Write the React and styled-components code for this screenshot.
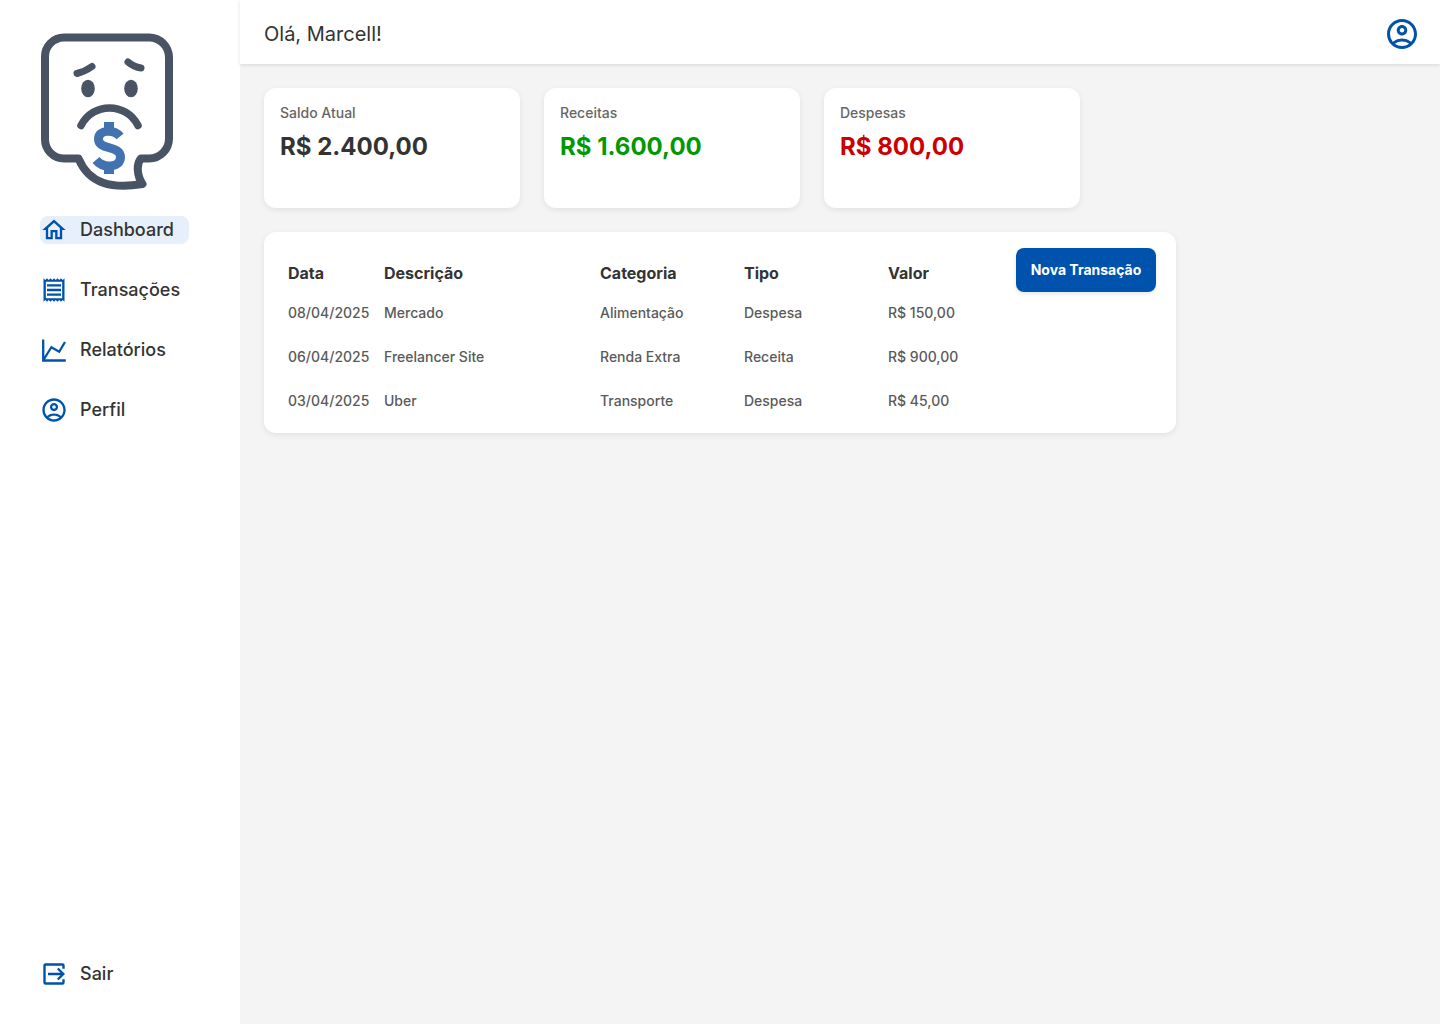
import React from "react";
import styled, { createGlobalStyle } from "styled-components";
import { MdOutlineHome, MdOutlineReceipt, MdOutlineAccountCircle } from "react-icons/md";

const GlobalStyle = createGlobalStyle`
  *, *::before, *::after { box-sizing: border-box; }
  body { margin: 0; background: #f4f4f4; color: #333; font-family: Inter, "Liberation Sans", sans-serif; }
  h1, h2, p { margin: 0; }
`;

const Shell = styled.div`
  display: flex;
  min-height: 100vh;
`;

const Sidebar = styled.aside`
  flex: 0 0 240px;
  display: flex;
  flex-direction: column;
  align-items: flex-start;
  padding: 32px 40px 36px;
  background: #fff;
`;

const Logo = styled.svg`
  display: block;
  width: 136px;
  height: 160px;
`;

const Menu = styled.nav`
  display: flex;
  flex: 1;
  flex-direction: column;
  align-items: flex-start;
  gap: 32px;
  margin-top: 24px;
`;

const MenuLink = styled.a`
  display: flex;
  align-items: center;
  gap: 12px;
  height: 28px;
  padding-right: 15px;
  border-radius: 8px;
  background: ${(p) => (p.$active ? "#e6effa" : "transparent")};
  color: #333;
  font-size: 18px;
  font-weight: 500;
  line-height: 28px;
  text-decoration: none;
  white-space: nowrap;

  svg { flex: none; width: 28px; height: 28px; color: #0053ad; }
`;

const Main = styled.div`
  flex: 1;
  min-width: 0;
`;

const TopBar = styled.header`
  display: flex;
  align-items: center;
  justify-content: space-between;
  height: 64px;
  padding: 4px 20px 0 24px;
  background: #fff;
  box-shadow: 0 1px 4px rgba(0, 0, 0, 0.12);
`;

const Greeting = styled.h1`
  font-size: 20px;
  font-weight: 400;
  line-height: 24px;
`;

const ProfileButton = styled.button`
  display: flex;
  padding: 0;
  border: 0;
  background: none;
  color: #0053ad;
  cursor: pointer;

  svg { width: 36px; height: 36px; }
`;

const Content = styled.main`
  display: flex;
  flex-direction: column;
  gap: 24px;
  padding: 24px;
`;

const Cards = styled.section`
  display: flex;
  flex-wrap: wrap;
  gap: 24px;
`;

const Card = styled.article`
  width: 256px;
  min-height: 120px;
  padding: 16px;
  border-radius: 12px;
  background: #fff;
  box-shadow: 0 2px 6px rgba(0, 0, 0, 0.08);
`;

const CardLabel = styled.h2`
  color: #666;
  font-size: 14px;
  font-weight: 500;
  line-height: 18px;
`;

const CardValue = styled.p`
  margin-top: 8px;
  color: ${(p) => p.$color};
  font-size: 24px;
  font-weight: 700;
  line-height: 34px;
`;

const Panel = styled.section`
  display: flex;
  align-items: flex-start;
  justify-content: space-between;
  width: 100%;
  max-width: 912px;
  padding: 16px 20px 10px 24px;
  border-radius: 12px;
  background: #fff;
  box-shadow: 0 2px 6px rgba(0, 0, 0, 0.08);
`;

const Table = styled.table`
  border-collapse: collapse;
  table-layout: fixed;
  width: 720px;
  text-align: left;

  th, td { padding: 0; white-space: nowrap; }
  th { height: 43px; padding-top: 7px; color: #333; font-size: 16px; font-weight: 700; line-height: 20px; }
  td { height: 44px; color: #5a5a5a; font-size: 14px; font-weight: 500; line-height: 20px; }
`;

const Col = styled.col`
  width: ${(p) => p.$width}px;
`;

const PrimaryButton = styled.button`
  flex: none;
  width: 140px;
  height: 44px;
  padding: 0;
  border: 0;
  border-radius: 8px;
  background: #0053ad;
  box-shadow: 0 2px 4px rgba(0, 0, 0, 0.1);
  color: #fff;
  font: 700 14px/20px Inter, "Liberation Sans", sans-serif;
  cursor: pointer;
`;

function ChartIcon() {
  return (
    <svg viewBox="0 0 28 28" fill="none" stroke="currentColor" strokeWidth="2.3" aria-hidden="true">
      <path d="M3.2 3.5v21h22.6M3.7 23.5l7.7-12.3 7.8 4.6 5.8-9.8" />
    </svg>
  );
}

function ExitIcon() {
  return (
    <svg viewBox="0 0 28 28" fill="none" stroke="currentColor" strokeWidth="2.4" aria-hidden="true">
      <path d="M23.5 8.8V5.5a1 1 0 0 0-1-1h-17a1 1 0 0 0-1 1v17a1 1 0 0 0 1 1h17a1 1 0 0 0 1-1v-3.3M8 14h15M17.8 8.5l5.500 5.500-5.500 5.500" />
    </svg>
  );
}

function SadBill() {
  return (
    <Logo viewBox="0 0 136 160" role="img" aria-label="Logo" fill="none" stroke="#485364" strokeWidth="8" strokeLinecap="round" strokeLinejoin="round">
      <path d="M38.5 126.5H24A19 19 0 0 1 5 107V25A19 19 0 0 1 24 5.5H109A20 20 0 0 1 129 26V106A20 20 0 0 1 109 126.5H101C96 132 97 144 102.5 152C72 157 49 152 38.5 126.5Z" />
      <path d="M37 41.5Q45 39.5 52 34.5M88 30Q94 35 101 36" strokeWidth="7" />
      <path d="M41 93.5C53 70 86 70 98 93.5" strokeWidth="7.5" />
      <g fill="#485364" stroke="none">
        <ellipse cx="48" cy="56.5" rx="6.8" ry="8.8" />
        <ellipse cx="91" cy="56.5" rx="6.8" ry="8.8" />
      </g>
      <g stroke="#4273b0" strokeLinecap="butt">
        <path d="M80 104.5C74 97 58.5 97.5 58.5 107C58.5 118.5 80.5 113 80.5 125C80.5 136 63.5 137 56 128" strokeWidth="9" />
        <path d="M69 90V100M69 133V142" strokeWidth="10" />
      </g>
    </Logo>
  );
}

const cards = [
  { label: "Saldo Atual", value: "R$ 2.400,00", color: "#333" },
  { label: "Receitas", value: "R$ 1.600,00", color: "#090" },
  { label: "Despesas", value: "R$ 800,00", color: "#c00" },
];

const columns = [
  { name: "Data", width: 96 },
  { name: "Descrição", width: 216 },
  { name: "Categoria", width: 144 },
  { name: "Tipo", width: 144 },
  { name: "Valor", width: 120 },
];

const rows = [
  ["08/04/2025", "Mercado", "Alimentação", "Despesa", "R$ 150,00"],
  ["06/04/2025", "Freelancer Site", "Renda Extra", "Receita", "R$ 900,00"],
  ["03/04/2025", "Uber", "Transporte", "Despesa", "R$ 45,00"],
];

export default function App() {
  return (
    <Shell>
      <GlobalStyle />
      <Sidebar>
        <SadBill />
        <Menu>
          <MenuLink href="#dashboard" $active aria-current="page"><MdOutlineHome />Dashboard</MenuLink>
          <MenuLink href="#transacoes"><MdOutlineReceipt />Transações</MenuLink>
          <MenuLink href="#relatorios"><ChartIcon />Relatórios</MenuLink>
          <MenuLink href="#perfil"><MdOutlineAccountCircle />Perfil</MenuLink>
        </Menu>
        <MenuLink href="#sair"><ExitIcon />Sair</MenuLink>
      </Sidebar>
      <Main>
        <TopBar>
          <Greeting>Olá, Marcell!</Greeting>
          <ProfileButton type="button" aria-label="Perfil"><MdOutlineAccountCircle /></ProfileButton>
        </TopBar>
        <Content>
          <Cards>
            {cards.map((card) => (
              <Card key={card.label}>
                <CardLabel>{card.label}</CardLabel>
                <CardValue $color={card.color}>{card.value}</CardValue>
              </Card>
            ))}
          </Cards>
          <Panel>
            <Table>
              <colgroup>{columns.map((c) => <Col key={c.name} $width={c.width} />)}</colgroup>
              <thead><tr>{columns.map((c) => <th key={c.name} scope="col">{c.name}</th>)}</tr></thead>
              <tbody>
                {rows.map((row) => (
                  <tr key={row[0]}>{row.map((cell) => <td key={cell}>{cell}</td>)}</tr>
                ))}
              </tbody>
            </Table>
            <PrimaryButton type="button">Nova Transação</PrimaryButton>
          </Panel>
        </Content>
      </Main>
    </Shell>
  );
}
